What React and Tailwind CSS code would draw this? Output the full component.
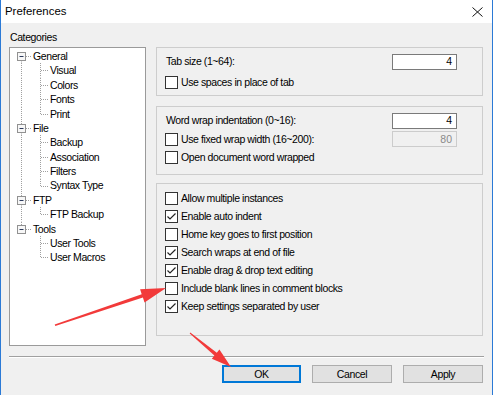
import React from "react";

const FONT = { fontFamily: '"Liberation Sans", Arial, sans-serif' };
const TXT = "text-[10.5px] tracking-[-0.4px] leading-none text-black";

function Check({ checked }) {
  return (
    <span className="w-[13px] h-[13px] border border-[#333333] bg-white shrink-0 flex items-center justify-center">
      {checked && (
        <svg width="11" height="11" viewBox="0 0 11 11">
          <path d="M1.5 5.5 L4 8 L9.5 2.5" fill="none" stroke="#222" strokeWidth="1.2" />
        </svg>
      )}
    </span>
  );
}

function CheckRow({ label, checked, className = "" }) {
  return (
    <div className={"h-[18px] flex items-center " + className}>
      <Check checked={checked} />
      <span className={"ml-[3px] " + TXT}>{label}</span>
    </div>
  );
}

function Input({ value, disabled }) {
  return (
    <div
      className={
        "w-[65px] h-[16px] flex items-center justify-end pr-[4px] text-[10.5px] leading-none " +
        (disabled ? "border border-[#cccccc] bg-[#f0f0f0] text-[#8a8a8a]" : "border border-[#7a7a7a] bg-white text-black")
      }
    >
      {value}
    </div>
  );
}

const tree = [
  { label: "General", root: true, first: true },
  { label: "Visual" },
  { label: "Colors" },
  { label: "Fonts" },
  { label: "Print", lastChild: true },
  { label: "File", root: true },
  { label: "Backup" },
  { label: "Association" },
  { label: "Filters" },
  { label: "Syntax Type", lastChild: true },
  { label: "FTP", root: true },
  { label: "FTP Backup", lastChild: true },
  { label: "Tools", root: true, last: true },
  { label: "User Tools", lastRoot: true },
  { label: "User Macros", lastChild: true, lastRoot: true },
];

function TreeRow({ item }) {
  const h = 14.4;
  const c = 7.5;
  const dot = { stroke: "#a0a0a0", strokeWidth: 1, strokeDasharray: "1 1", fill: "none" };
  if (item.root) {
    return (
      <div className="h-[14.4px] flex items-center">
        <svg width="23" height={h} className="shrink-0">
          {!item.first && <line x1="11.5" y1="0" x2="11.5" y2={c - 4} style={dot} />}
          {!item.last && <line x1="11.5" y1={c + 4} x2="11.5" y2={h} style={dot} />}
          <rect x="7.5" y={c - 4} width="8" height="8" fill="#f7f7f7" stroke="#919191" />
          <line x1="9.5" y1={c} x2="13.5" y2={c} stroke="#2c3a5c" strokeWidth="1" />
          <line x1="16" y1={c} x2="21" y2={c} style={dot} />
        </svg>
        <span className={TXT}>{item.label}</span>
      </div>
    );
  }
  return (
    <div className="h-[14.4px] flex items-center">
      <svg width="40" height={h} className="shrink-0">
        {!item.lastRoot && <line x1="11.5" y1="0" x2="11.5" y2={h} style={dot} />}
        <line x1="30.5" y1="0" x2="30.5" y2={item.lastChild ? c : h} style={dot} />
        <line x1="31" y1={c} x2="38" y2={c} style={dot} />
      </svg>
      <span className={TXT}>{item.label}</span>
    </div>
  );
}

export default function App() {
  return (
    <div className="w-[495px] h-[395px] bg-white overflow-hidden relative" style={FONT}>
      <div className="w-[493px] h-[395px] border-x border-[#2b7ad6] bg-[#f0f0f0] flex flex-col">
        {/* title bar */}
        <div className="h-[23px] bg-white flex items-center justify-between pl-[4px] pr-[9px] shrink-0">
          <span className="text-[11.4px] leading-none text-black">Preferences</span>
          <svg width="11" height="10" viewBox="0 0 11 10">
            <path d="M0.5 0.5 L10.5 9.5 M10.5 0.5 L0.5 9.5" stroke="#111" strokeWidth="1" fill="none" />
          </svg>
        </div>

        {/* body */}
        <div className="flex-1 pl-[8px] flex flex-col">
          <div className="h-[24px] pt-[4px] flex items-center pl-[1px]">
            <span className={TXT}>Categories</span>
          </div>

          <div className="flex">
            {/* tree */}
            <div className="w-[137px] h-[299px] border border-[#9a9a9a] bg-white pt-[1px] shrink-0">
              {tree.map((it) => (
                <TreeRow key={it.label} item={it} />
              ))}
            </div>

            {/* right groups */}
            <div className="ml-[10px] w-[327px] flex flex-col">
              <div className="h-[49px] border border-[#cdcdcd] pt-[5px] pl-[8px] pr-[25px]">
                <div className="h-[17px] flex items-center justify-between">
                  <span className={"ml-[1px] " + TXT}>Tab size (1~64):</span>
                  <Input value="4" />
                </div>
                <CheckRow className="mt-[3px]" label="Use spaces in place of tab" />
              </div>

              <div className="mt-[10px] h-[69px] border border-[#cdcdcd] pt-[5px] pl-[8px] pr-[25px]">
                <div className="h-[17px] flex items-center justify-between">
                  <span className={"ml-[1px] " + TXT}>Word wrap indentation (0~16):</span>
                  <Input value="4" />
                </div>
                <div className="flex items-center justify-between mt-[1px]">
                  <CheckRow label="Use fixed wrap width (16~200):" />
                  <Input value="80" disabled />
                </div>
                <CheckRow label="Open document word wrapped" />
              </div>

              <div className="mt-[8px] h-[153px] border border-[#cdcdcd] pt-[5px] pl-[8px]">
                <CheckRow label="Allow multiple instances" />
                <CheckRow label="Enable auto indent" checked />
                <CheckRow label="Home key goes to first position" />
                <CheckRow label="Search wraps at end of file" checked />
                <CheckRow label="Enable drag & drop text editing" checked />
                <CheckRow label="Include blank lines in comment blocks" />
                <CheckRow label="Keep settings separated by user" checked />
              </div>
            </div>
          </div>

          {/* separator */}
          <div className="mt-[10px] w-[475px] h-[1px] bg-[#a0a0a0]" />
          <div className="w-[475px] h-[1px] bg-white" />

          {/* buttons */}
          <div className="mt-[7px] w-[474px] flex justify-end gap-[11px]">
            <button className={"w-[79px] h-[18px] border-2 border-[#0078d7] bg-[#e1e1e1] flex items-center justify-center " + TXT}>
              OK
            </button>
            <button className={"w-[80px] h-[18px] border border-[#adadad] bg-[#e1e1e1] flex items-center justify-center " + TXT}>
              Cancel
            </button>
            <button className={"w-[80px] h-[18px] border border-[#adadad] bg-[#e1e1e1] flex items-center justify-center " + TXT}>
              Apply
            </button>
          </div>
        </div>
      </div>

      {/* red annotation arrows */}
      <svg className="absolute left-0 top-0 pointer-events-none" width="495" height="395">
        <polygon
          points="54.7,324.4 141.7,294.2 140.1,289.3 166,288 144.5,302.5 142.9,297.6 55.3,326.1"
          fill="#f23a3a"
        />
        <polygon
          points="189.7,333.4 214.4,355.6 211.8,358.8 231,367 219.4,349.6 216.8,352.8 190.3,332.6"
          fill="#f23a3a"
        />
      </svg>
    </div>
  );
}
